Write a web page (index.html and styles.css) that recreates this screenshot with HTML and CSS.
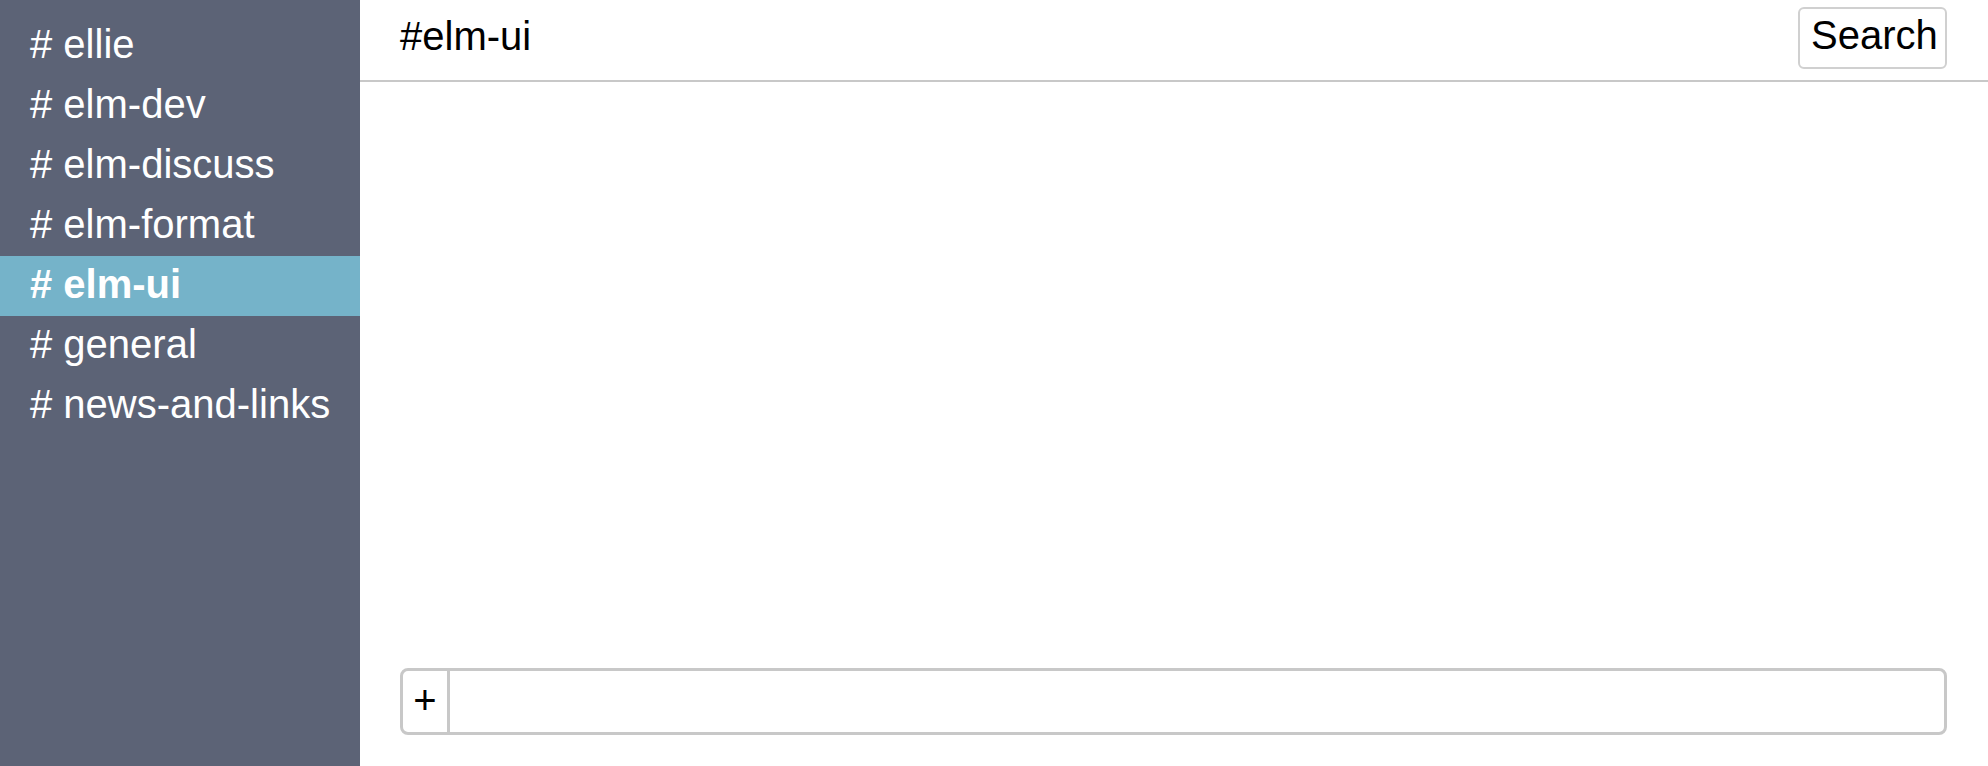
FILE: index.html
```html
<!DOCTYPE html>
<html>
<head>
<meta charset="utf-8">
<link rel="stylesheet" href="styles.css">
</head>
<body>
<div class="app">
  <nav class="sidebar">
    <div class="channel"># ellie</div>
    <div class="channel"># elm-dev</div>
    <div class="channel"># elm-discuss</div>
    <div class="channel"># elm-format</div>
    <div class="channel active"># elm-ui</div>
    <div class="channel"># general</div>
    <div class="channel"># news-and-links</div>
  </nav>
  <main class="main">
    <header class="header">
      <div class="title">#elm-ui</div>
      <button class="search">Search</button>
    </header>
    <div class="messages"></div>
    <div class="composer">
      <div class="plus">+</div>
      <input class="field" type="text">
    </div>
  </main>
</div>
</body>
</html>
```
FILE: styles.css
```css
html, body {
  margin: 0;
  padding: 0;
  height: 100%;
}
body {
  font-family: "Liberation Sans", Arial, Helvetica, sans-serif;
  font-size: 40px;
  line-height: 40px;
  color: #000;
  background: #fff;
}
.app {
  display: flex;
  height: 100vh;
}
.sidebar {
  width: 360px;
  flex: none;
  background: rgb(92, 99, 118);
  padding-top: 16px;
  box-sizing: border-box;
  display: flex;
  flex-direction: column;
}
.channel {
  color: #fff;
  padding: 8px 30px 12px;
  height: 40px;
  white-space: nowrap;
}
.channel.active {
  background: rgb(117, 179, 201);
  font-weight: bold;
}
.main {
  flex: 1;
  display: flex;
  flex-direction: column;
  min-width: 0;
}
.header {
  height: 80px;
  box-sizing: border-box;
  border-bottom: 2px solid rgb(200, 200, 200);
  display: flex;
  align-items: flex-start;
  justify-content: space-between;
  padding: 7px 41px 0 40px;
  box-sizing: content-box;
  height: 73px;
}
.title {
  margin-top: 9px;
}
.search {
  font-family: inherit;
  font-size: 40px;
  line-height: 40px;
  color: #000;
  background: #fff;
  border: 2px solid rgb(208, 208, 208);
  border-radius: 6px;
  padding: 6px 11px 12px;
  height: 62px;
  width: 149px;
  box-sizing: border-box;
  margin: 0;
}
.messages {
  flex: 1;
}
.composer {
  display: flex;
  margin: 0 41px 31px 40px;
  height: 67px;
  box-sizing: border-box;
  border: 3px solid rgb(200, 200, 200);
  border-radius: 8px;
}
.plus {
  width: 44px;
  display: flex;
  align-items: center;
  justify-content: center;
  border-right: 3px solid rgb(200, 200, 200);
  padding-bottom: 4px;
  box-sizing: content-box;
}
.field {
  flex: 1;
  border: none;
  outline: none;
  background: transparent;
  font-family: inherit;
  font-size: 40px;
  padding: 0 10px;
  min-width: 0;
}
```
